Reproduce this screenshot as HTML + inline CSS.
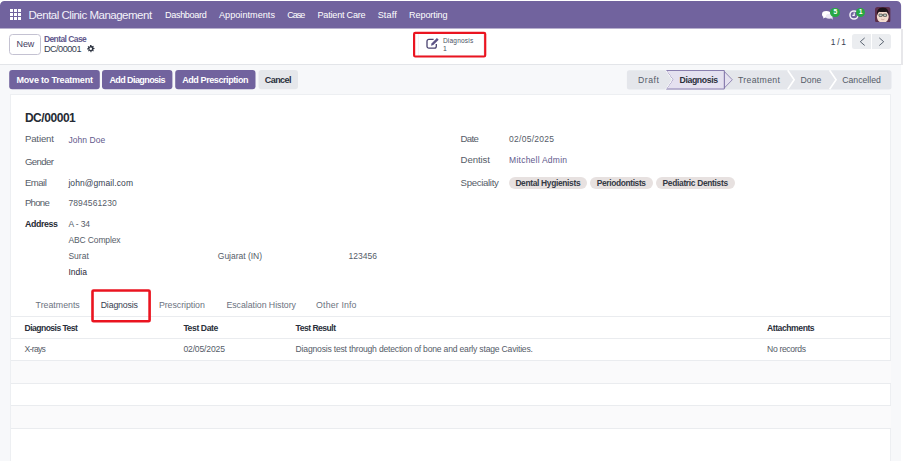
<!DOCTYPE html>
<html><head><meta charset="utf-8">
<style>
*{box-sizing:border-box;margin:0;padding:0}
html,body{width:903px;height:463px;overflow:hidden;background:#fff;font-family:"Liberation Sans",sans-serif;color:#374151}
.a{position:absolute;white-space:pre;line-height:1}
.b{position:absolute}
.btn{top:70px;height:19.5px;border-radius:3px;background:#71639e}
.tag{top:176.5px;height:12.6px;border-radius:6.3px;background:#e7e1e0}
.ln{left:11px;width:880px;height:1px;background:#eaecef}
.rw{left:11px;width:880px;background:#fafafb}
</style></head><body>
<svg class="b" style="left:0;top:0" width="903" height="30" viewBox="0 0 903 30"><path d="M0 28.500V5.500A4.500 4.500 0 014.500 1H896.600A4.500 4.500 0 01901.100 5.500V28.500Z" fill="#71639e"/></svg>
<svg class="b" style="left:10px;top:9px" width="11" height="11" viewBox="0 0 11 11"><g fill="#fff"><rect x="0" y="0" width="3" height="3"/><rect x="4" y="0" width="3" height="3"/><rect x="8" y="0" width="3" height="3"/><rect x="0" y="4" width="3" height="3"/><rect x="4" y="4" width="3" height="3"/><rect x="8" y="4" width="3" height="3"/><rect x="0" y="8" width="3" height="3"/><rect x="4" y="8" width="3" height="3"/><rect x="8" y="8" width="3" height="3"/></g></svg>
<!-- systray -->
<svg class="b" style="left:822px;top:10.5px" width="11" height="9" viewBox="0 0 11 9"><ellipse cx="4.300" cy="3.200" rx="4.300" ry="3.200" fill="#fff"/><path d="M1.600 5l-.6 2.600 3-1.400z" fill="#fff"/><ellipse cx="7.200" cy="5.300" rx="3.400" ry="2.500" fill="#ece9f5"/><path d="M9 7l1.800 1.800-.4-2.800z" fill="#ece9f5"/></svg>
<div class="b" style="left:830.200px;top:7.500px;width:9.600px;height:9.600px;border-radius:5px;background:#27a844"></div>
<svg class="b" style="left:849px;top:9.500px" width="10" height="10" viewBox="0 0 10 10"><circle cx="5" cy="5" r="4.050" fill="none" stroke="#f3f1f9" stroke-width="1.500"/><path d="M5.200 2.600V5.400H3.400" fill="none" stroke="#fff" stroke-width="1.100"/></svg>
<div class="b" style="left:855.500px;top:7.500px;width:9.600px;height:9.600px;border-radius:5px;background:#27a844"></div>
<svg class="b" style="left:875.200px;top:6.800px" width="15.600" height="15.600" viewBox="0 0 16 16"><defs><clipPath id="av"><rect width="16" height="16" rx="2.600"/></clipPath></defs><g clip-path="url(#av)"><rect width="16" height="16" fill="#5c2e49"/><path d="M2 10.500C1.600 6.500 4 4.200 8 4.200s6.400 2.300 6 6.300c-.4 3.600-3 5.700-6 5.700s-5.600-2.100-6-5.700z" fill="#f4dccf"/><path d="M2.300 9C1.200 3.800 3.600.4 8 .4s6.800 3.400 5.700 8.600c-.3-2.300-.9-3.500-1.500-4C10.500 5.300 5.500 5.300 3.800 5c-.6.500-1.200 1.700-1.500 4z" fill="#1c1318"/><rect x="4.100" y="7.300" width="3.300" height="2.300" rx=".4" fill="#cfe0d6" stroke="#2a2a2a" stroke-width=".7"/><rect x="8.600" y="7.300" width="3.300" height="2.300" rx=".4" fill="#cfe0d6" stroke="#2a2a2a" stroke-width=".7"/><path d="M7.400 8.200h1.200" stroke="#2a2a2a" stroke-width=".6"/><path d="M6.300 12.400c1 .8 2.400.8 3.400 0" fill="none" stroke="#b98a7a" stroke-width=".6"/></g></svg>
<!-- control panel -->
<div class="b" style="left:901px;top:28.500px;width:2px;height:36px;background:#e7e7ea"></div>
<div class="b" style="left:0;top:64px;width:901px;height:1px;background:#e3e5e9"></div>
<div class="b" style="left:9.200px;top:34px;width:31.500px;height:21px;border:1px solid #c4c2d2;border-radius:3.500px;background:#fff"></div>
<svg class="b" style="left:87.300px;top:45.300px" width="7.500" height="7.500" viewBox="0 0 16 16"><path fill="#2f3542" d="M9.400 0l.5 2.200 1.300.55L13.100 1.500l1.400 1.400-1.250 1.900.55 1.300 2.200.5v2l-2.200.5-.55 1.300 1.250 1.900-1.400 1.400-1.900-1.250-1.300.55-.5 2.200h-2l-.5-2.200-1.300-.55-1.900 1.250-1.400-1.400 1.250-1.900-.55-1.300L0 9.400v-2l2.200-.5.55-1.300L1.500 3.700l1.400-1.400 1.900 1.250 1.300-.55L6.600 0zM8 5.300a2.700 2.700 0 100 5.400 2.700 2.700 0 000-5.400z"/></svg>
<div class="b" style="left:418px;top:33px;width:66px;height:23px;border:1px solid #f3f4f6"></div>
<svg class="b" style="left:410px;top:29px" width="80" height="32" viewBox="410 29 80 32"><rect x="414.100" y="32.900" width="71.100" height="23.600" rx="1.200" fill="none" stroke="#ea1420" stroke-width="2.200"/></svg>
<svg class="b" style="left:425.500px;top:37px" width="13.500" height="12" viewBox="0 0 13.500 12"><path d="M10.300 7v2.300a1.900 1.900 0 01-1.900 1.900H2.900A1.900 1.900 0 011 9.300V4.200a1.900 1.900 0 011.900-1.900H7.600" fill="none" stroke="#4a4370" stroke-width="1.300"/><path d="M5 8.700l.5-2.300L10.900.9l1.800 1.800-5.400 5.400z" fill="#5d5487"/></svg>
<!-- pager -->
<div class="b" style="left:851.900px;top:34px;width:19.200px;height:15.300px;background:#ebedf0;border-radius:2.500px 0 0 2.500px"></div>
<div class="b" style="left:871.800px;top:34px;width:19.200px;height:15.300px;background:#ebedf0;border-radius:0 2.500px 2.500px 0"></div>
<svg class="b" style="left:858.500px;top:37px" width="7" height="9.500" viewBox="0 0 7 9.500"><path d="M5.700 .9L1.300 4.700l4.400 3.800" fill="none" stroke="#4b5563" stroke-width=".9"/></svg>
<svg class="b" style="left:878px;top:37px" width="7" height="9.500" viewBox="0 0 7 9.500"><path d="M1.300 .9l4.400 3.800-4.400 3.800" fill="none" stroke="#4b5563" stroke-width=".9"/></svg>
<!-- background + sheet -->
<div class="b" style="left:0;top:65px;width:901px;height:396px;background:#f7f8fa"></div>
<div class="b" style="left:9.700px;top:94px;width:881.500px;height:369px;background:#fff;border:1px solid #edeff2;border-bottom:none"></div>
<div class="b" style="left:0;top:461px;width:903px;height:2px;background:#fff"></div>
<!-- buttons -->
<svg class="b" style="left:0;top:66px" width="310" height="28" viewBox="0 66 310 28"><g fill="#71639e"><rect x="9.200" y="70" width="90.600" height="19.300" rx="3"/><rect x="102" y="70" width="70.400" height="19.300" rx="3"/><rect x="175.200" y="70" width="80.300" height="19.300" rx="3"/></g><rect x="258.500" y="70" width="39.500" height="19.300" rx="3" fill="#e5e7eb"/></svg>
<!-- statusbar -->
<svg class="b" style="left:626px;top:69px" width="267" height="22" viewBox="626 69 267 22">
 <rect x="626.900" y="70.200" width="264.600" height="19.200" rx="2.500" fill="#e4e6eb"/>
 <path d="M724.300 71.500L732.300 79.750L724.300 88Z" fill="#e5e1f0" stroke="#71639e" stroke-width=".7"/>
 <path d="M666.200 70.500H724.300V89H666.200L672.800 79.750Z" fill="#e5e1f0" stroke="#71639e" stroke-width=".8"/>
 <path d="M665.700 70.200l6.600 9.550-6.600 9.550" fill="none" stroke="#fff" stroke-width="1"/>
 <path d="M787.700 70.200l6.500 9.550-6.500 9.550" fill="none" stroke="#fff" stroke-width="1.600"/>
 <path d="M829.600 70.200l6.500 9.550-6.500 9.550" fill="none" stroke="#fff" stroke-width="1.600"/>
</svg>
<!-- tags -->
<div class="b tag" style="left:508.800px;width:78.400px"></div>
<div class="b tag" style="left:590.200px;width:62.500px"></div>
<div class="b tag" style="left:656px;width:78.700px"></div>
<!-- table -->
<div class="b rw" style="top:361px;height:22px"></div>
<div class="b rw" style="top:406px;height:22px"></div>
<div class="b ln" style="top:316px"></div>
<div class="b ln" style="top:338px"></div>
<div class="b ln" style="top:360px"></div>
<div class="b ln" style="top:383px"></div>
<div class="b ln" style="top:405px"></div>
<div class="b ln" style="top:428px"></div>
<svg class="b" style="left:88px;top:286px" width="68" height="40" viewBox="88 286 68 40"><rect x="92.500" y="290.500" width="57.100" height="30.700" rx="1" fill="none" stroke="#ea1420" stroke-width="2.600"/></svg>
<div class="a" style="left:28.5px;top:10.3px;font-size:11.5px;color:#f3f1f9;letter-spacing:-0.49px">Dental Clinic Management</div>
<div class="a" style="left:165.0px;top:11.3px;font-size:9.1px;color:#ffffff;letter-spacing:-0.34px">Dashboard</div>
<div class="a" style="left:219.0px;top:11.3px;font-size:9.1px;color:#ffffff;letter-spacing:0.03px">Appointments</div>
<div class="a" style="left:287.2px;top:11.3px;font-size:9.1px;color:#ffffff;letter-spacing:-1.01px">Case</div>
<div class="a" style="left:317.5px;top:11.3px;font-size:9.1px;color:#ffffff;letter-spacing:-0.22px">Patient Care</div>
<div class="a" style="left:377.7px;top:11.3px;font-size:9.1px;color:#ffffff;letter-spacing:0.11px">Staff</div>
<div class="a" style="left:409.0px;top:11.3px;font-size:9.1px;color:#ffffff;letter-spacing:-0.10px">Reporting</div>
<div class="a" style="left:16.6px;top:40.4px;font-size:9px;color:#45405f;letter-spacing:-0.16px">New</div>
<div class="a" style="left:43.9px;top:34.8px;font-size:8.5px;color:#62598c;letter-spacing:-0.58px;font-weight:700">Dental Case</div>
<div class="a" style="left:43.9px;top:45.2px;font-size:9.2px;color:#374151;letter-spacing:-0.53px">DC/00001</div>
<div class="a" style="left:442.9px;top:38.4px;font-size:6.6px;color:#4b5563;letter-spacing:0.18px">Diagnosis</div>
<div class="a" style="left:443.0px;top:46.2px;font-size:6.8px;color:#4b5563;letter-spacing:0.00px">1</div>
<div class="a" style="left:830.7px;top:37.9px;font-size:8.4px;color:#374151;letter-spacing:-0.27px">1 / 1</div>
<div class="a" style="left:16.5px;top:76.4px;font-size:9px;color:#ffffff;letter-spacing:-0.19px;font-weight:700">Move to Treatment</div>
<div class="a" style="left:109.4px;top:76.4px;font-size:9px;color:#ffffff;letter-spacing:-0.58px;font-weight:700">Add Diagnosis</div>
<div class="a" style="left:182.2px;top:76.4px;font-size:9px;color:#ffffff;letter-spacing:-0.41px;font-weight:700">Add Prescription</div>
<div class="a" style="left:264.8px;top:76.4px;font-size:9px;color:#2a303b;letter-spacing:-0.56px;font-weight:700">Cancel</div>
<div class="a" style="left:637.9px;top:75.6px;font-size:8.7px;color:#555c68;letter-spacing:0.54px">Draft</div>
<div class="a" style="left:679.6px;top:75.6px;font-size:8.7px;color:#2a303b;letter-spacing:-0.39px;font-weight:700">Diagnosis</div>
<div class="a" style="left:738.0px;top:75.6px;font-size:8.7px;color:#555c68;letter-spacing:0.33px">Treatment</div>
<div class="a" style="left:800.6px;top:75.6px;font-size:8.7px;color:#555c68;letter-spacing:-0.03px">Done</div>
<div class="a" style="left:842.3px;top:75.6px;font-size:8.7px;color:#555c68;letter-spacing:-0.02px">Cancelled</div>
<div class="a" style="left:24.9px;top:111.8px;font-size:12px;color:#262b35;letter-spacing:-0.45px;font-weight:700">DC/00001</div>
<div class="a" style="left:24.9px;top:133.9px;font-size:9.6px;color:#555c68;letter-spacing:-0.13px">Patient</div>
<div class="a" style="left:68.4px;top:135.8px;font-size:8.5px;color:#62598c;letter-spacing:0.06px">John Doe</div>
<div class="a" style="left:24.9px;top:156.9px;font-size:9.6px;color:#555c68;letter-spacing:-0.58px">Gender</div>
<div class="a" style="left:24.9px;top:177.9px;font-size:9.6px;color:#555c68;letter-spacing:-0.53px">Email</div>
<div class="a" style="left:68.4px;top:178.8px;font-size:8.5px;color:#374151;letter-spacing:0.09px">john@gmail.com</div>
<div class="a" style="left:24.9px;top:197.9px;font-size:9.6px;color:#555c68;letter-spacing:-0.71px">Phone</div>
<div class="a" style="left:68.4px;top:198.8px;font-size:8.5px;color:#555c68;letter-spacing:0.12px">7894561230</div>
<div class="a" style="left:24.9px;top:219.6px;font-size:8.8px;color:#262b35;letter-spacing:-0.35px;font-weight:700">Address</div>
<div class="a" style="left:68.4px;top:219.8px;font-size:8.5px;color:#555c68;letter-spacing:-0.12px">A - 34</div>
<div class="a" style="left:68.4px;top:235.8px;font-size:8.5px;color:#555c68;letter-spacing:-0.12px">ABC Complex</div>
<div class="a" style="left:68.4px;top:251.8px;font-size:8.5px;color:#555c68;letter-spacing:0.02px">Surat</div>
<div class="a" style="left:217.8px;top:251.8px;font-size:8.5px;color:#555c68;letter-spacing:-0.01px">Gujarat (IN)</div>
<div class="a" style="left:348.5px;top:251.8px;font-size:8.5px;color:#555c68;letter-spacing:0.03px">123456</div>
<div class="a" style="left:68.4px;top:267.8px;font-size:8.5px;color:#1f2937;letter-spacing:0.04px">India</div>
<div class="a" style="left:460.6px;top:133.9px;font-size:9.6px;color:#555c68;letter-spacing:-0.66px">Date</div>
<div class="a" style="left:509.1px;top:134.8px;font-size:8.5px;color:#555c68;letter-spacing:0.26px">02/05/2025</div>
<div class="a" style="left:460.6px;top:154.9px;font-size:9.6px;color:#555c68;letter-spacing:-0.09px">Dentist</div>
<div class="a" style="left:509.1px;top:155.8px;font-size:8.5px;color:#62598c;letter-spacing:0.24px">Mitchell Admin</div>
<div class="a" style="left:460.6px;top:177.9px;font-size:9.6px;color:#555c68;letter-spacing:-0.32px">Speciality</div>
<div class="a" style="left:515.4px;top:178.9px;font-size:8.4px;color:#343a45;letter-spacing:-0.32px;font-weight:700">Dental Hygienists</div>
<div class="a" style="left:596.8px;top:178.9px;font-size:8.4px;color:#343a45;letter-spacing:-0.36px;font-weight:700">Periodontists</div>
<div class="a" style="left:662.6px;top:178.9px;font-size:8.4px;color:#343a45;letter-spacing:-0.31px;font-weight:700">Pediatric Dentists</div>
<div class="a" style="left:35.6px;top:300.6px;font-size:8.8px;color:#6b7280;letter-spacing:0.00px">Treatments</div>
<div class="a" style="left:100.7px;top:300.6px;font-size:8.8px;color:#374151;letter-spacing:-0.17px">Diagnosis</div>
<div class="a" style="left:158.9px;top:300.6px;font-size:8.8px;color:#6b7280;letter-spacing:-0.05px">Prescription</div>
<div class="a" style="left:226.4px;top:300.6px;font-size:8.8px;color:#6b7280;letter-spacing:-0.05px">Escalation History</div>
<div class="a" style="left:316.1px;top:300.6px;font-size:8.8px;color:#6b7280;letter-spacing:0.14px">Other Info</div>
<div class="a" style="left:24.6px;top:323.7px;font-size:8.6px;color:#2a303b;letter-spacing:-0.56px;font-weight:700">Diagnosis Test</div>
<div class="a" style="left:183.4px;top:323.7px;font-size:8.6px;color:#2a303b;letter-spacing:-0.39px;font-weight:700">Test Date</div>
<div class="a" style="left:295.6px;top:323.7px;font-size:8.6px;color:#2a303b;letter-spacing:-0.52px;font-weight:700">Test Result</div>
<div class="a" style="left:767.0px;top:323.7px;font-size:8.6px;color:#2a303b;letter-spacing:-0.44px;font-weight:700">Attachments</div>
<div class="a" style="left:24.6px;top:344.7px;font-size:8.6px;color:#555c68;letter-spacing:-0.71px">X-rays</div>
<div class="a" style="left:183.4px;top:344.7px;font-size:8.6px;color:#555c68;letter-spacing:-0.16px">02/05/2025</div>
<div class="a" style="left:295.6px;top:344.7px;font-size:8.6px;color:#555c68;letter-spacing:-0.20px">Diagnosis test through detection of bone and early stage Cavities.</div>
<div class="a" style="left:767.0px;top:344.7px;font-size:8.6px;color:#555c68;letter-spacing:-0.33px">No records</div>
<div class="a" style="left:833.600px;top:8.800px;font-size:6.800px;font-weight:700;color:#fff">5</div>
<div class="a" style="left:858.800px;top:8.800px;font-size:6.800px;font-weight:700;color:#fff">1</div>
</body></html>
